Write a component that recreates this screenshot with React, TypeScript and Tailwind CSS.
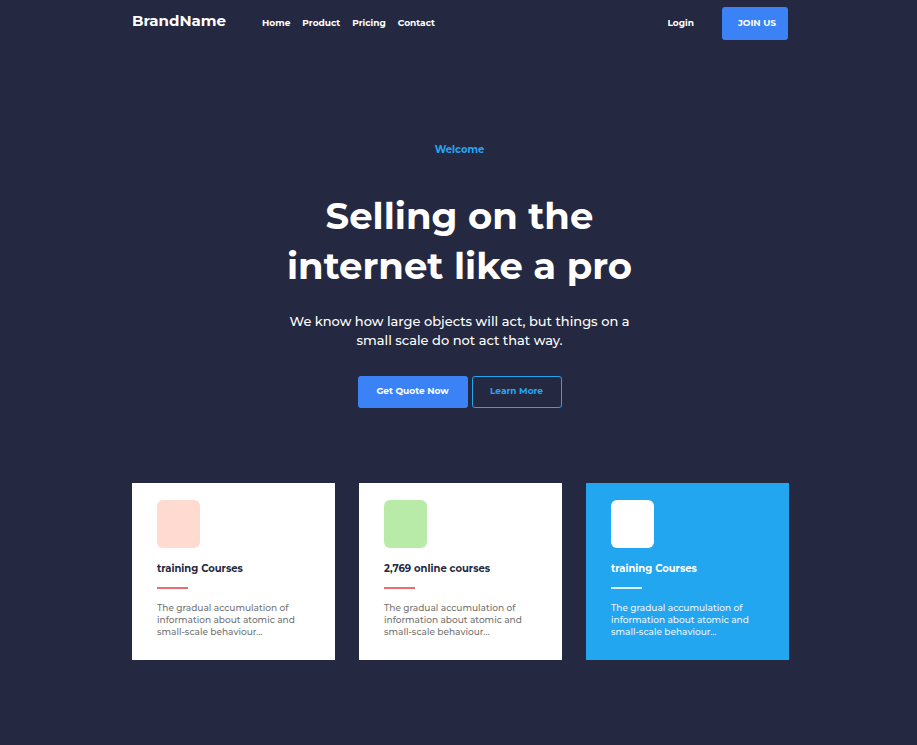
const navItems = ['Home', 'Product', 'Pricing', 'Contact'];

const cards = [
  { title: 'training Courses', card: 'bg-white text-[#252b42]', icon: 'bg-[#ffdad0]', rule: 'bg-[#ea6c70]', body: 'text-[#737373]' },
  { title: '2,769 online courses', card: 'bg-white text-[#252b42]', icon: 'bg-[#b9eba8]', rule: 'bg-[#ea6c70]', body: 'text-[#737373]' },
  { title: 'training Courses', card: 'bg-[#23a6f0] text-white', icon: 'bg-white', rule: 'bg-[#d8effc]', body: 'text-[#e9f6fe]' },
];

export default function App() {
  return (
    <div className="min-h-screen bg-[#252841] pl-1 font-[Montserrat,Inter,sans-serif] text-white">
      <div className="mx-auto max-w-[657px] pb-20">
        <header className="flex min-h-[47px] items-center pr-px text-[9px] font-bold">
          <a href="#" className="w-[130px] pb-1.5 text-[15px] leading-6">BrandName</a>
          <nav className="flex gap-3 pb-0.5">
            {navItems.map((item) => (
              <a key={item} href="#">{item}</a>
            ))}
          </nav>
          <a href="#" className="ml-auto mr-7 pb-0.5">Login</a>
          <button className="h-[33px] w-[66px] rounded-[3px] bg-[#3b82f6] pb-0.5 pl-1">JOIN US</button>
        </header>
        <main>
          <section className="flex flex-col items-center pr-0.5 pt-[95px] text-center">
            <p className="text-[10px] font-bold leading-4 text-[#23a6f0]">Welcome</p>
            <h1 className="mt-[33px] text-[37px] font-bold leading-[50px]">
              Selling on the<br />internet like a pro
            </h1>
            <p className="mt-[21px] text-[13px] font-medium leading-[19px]">
              We know how large objects will act, but things on a<br />small scale do not act that way.
            </p>
            <div className="mt-[26px] flex gap-1 text-[9px] font-bold">
              <button className="h-8 w-[110px] rounded-[3px] bg-[#3b82f6] pb-0.5">Get Quote Now</button>
              <button className="h-8 w-[90px] rounded-[3px] border border-[#23a6f0] pb-0.5 text-[#23a6f0]">Learn More</button>
            </div>
          </section>
          <section className="mt-[75px] grid grid-cols-3 gap-6">
            {cards.map((c, i) => (
              <article key={i} className={`px-[25px] pb-[22px] pt-[17px] ${c.card}`}>
                <div className={`h-12 w-[43px] rounded-md ${c.icon}`} />
                <h2 className="mt-[13px] text-[10px] font-bold leading-4">{c.title}</h2>
                <div className={`mt-[10px] h-[2px] w-[31px] ${c.rule}`} />
                <p className={`mt-[13px] whitespace-nowrap text-[9px] font-medium leading-[12px] ${c.body}`}>
                  The gradual accumulation of<br />information about atomic and<br />small-scale behaviour...
                </p>
              </article>
            ))}
          </section>
        </main>
      </div>
    </div>
  );
}
